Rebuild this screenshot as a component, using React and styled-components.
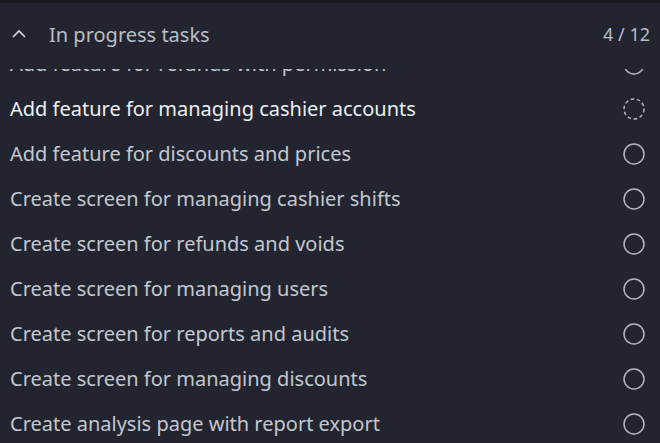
import React from "react";
import styled, { createGlobalStyle } from "styled-components";

const GlobalStyle = createGlobalStyle`
  html, body {
    margin: 0;
    padding: 0;
    background: #22252f;
  }
  body {
    font-family: "Noto Sans", "Liberation Sans", sans-serif;
  }
`;

const Panel = styled.section`
  width: 660px;
  height: 443px;
  background: #22252f;
  border-top: 3px solid #1a1c24;
  box-sizing: border-box;
  display: flex;
  flex-direction: column;
  overflow: hidden;
`;

const Header = styled.header`
  height: 62px;
  margin-bottom: 4px;
  flex-shrink: 0;
  display: flex;
  align-items: center;
  padding: 0 10px 0 10px;
  color: #b9bdc7;
  font-size: 20px;
`;

const Toggle = styled.span`
  width: 18px;
  display: flex;
  justify-content: center;
  margin-right: 21px;
`;

const Title = styled.span`
  flex: 1;
`;

const Count = styled.span`
  font-size: 18px;
  color: #b9bdc7;
`;

const List = styled.ul`
  list-style: none;
  margin: 0;
  padding: 0;
  flex: 1;
  overflow: hidden;
`;

const Scroller = styled.div`
  margin-top: -28px;
`;

const Row = styled.li`
  height: 45px;
  display: flex;
  align-items: center;
  justify-content: space-between;
  padding: 0 14px 0 10px;
  font-size: 20px;
  color: ${(p) => (p.$active ? "#eceef2" : "#c3c7cf")};
`;

const Circle = ({ dashed }) => (
  <svg width="24" height="24" viewBox="0 0 24 24">
    <circle
      cx="12"
      cy="12"
      r="10"
      fill="none"
      stroke="#b3b6be"
      strokeWidth="1.5"
      strokeDasharray={dashed ? "3.6 2.6" : undefined}
    />
  </svg>
);

const Chevron = () => (
  <svg width="16" height="10" viewBox="0 0 16 10">
    <path d="M2 8 L8 2 L14 8" fill="none" stroke="#d6d9df" strokeWidth="1.6" />
  </svg>
);

const tasks = [
  "Add feature for refunds with permission",
  "Add feature for managing cashier accounts",
  "Add feature for discounts and prices",
  "Create screen for managing cashier shifts",
  "Create screen for refunds and voids",
  "Create screen for managing users",
  "Create screen for reports and audits",
  "Create screen for managing discounts",
  "Create analysis page with report export",
];

export default function App() {
  return (
    <>
      <GlobalStyle />
      <Panel>
        <Header>
          <Toggle>
            <Chevron />
          </Toggle>
          <Title>In progress tasks</Title>
          <Count>4 / 12</Count>
        </Header>
        <List>
          <Scroller>
            {tasks.map((t, i) => (
              <Row key={t} $active={i === 1}>
                <span>{t}</span>
                <Circle dashed={i === 1} />
              </Row>
            ))}
          </Scroller>
        </List>
      </Panel>
    </>
  );
}
